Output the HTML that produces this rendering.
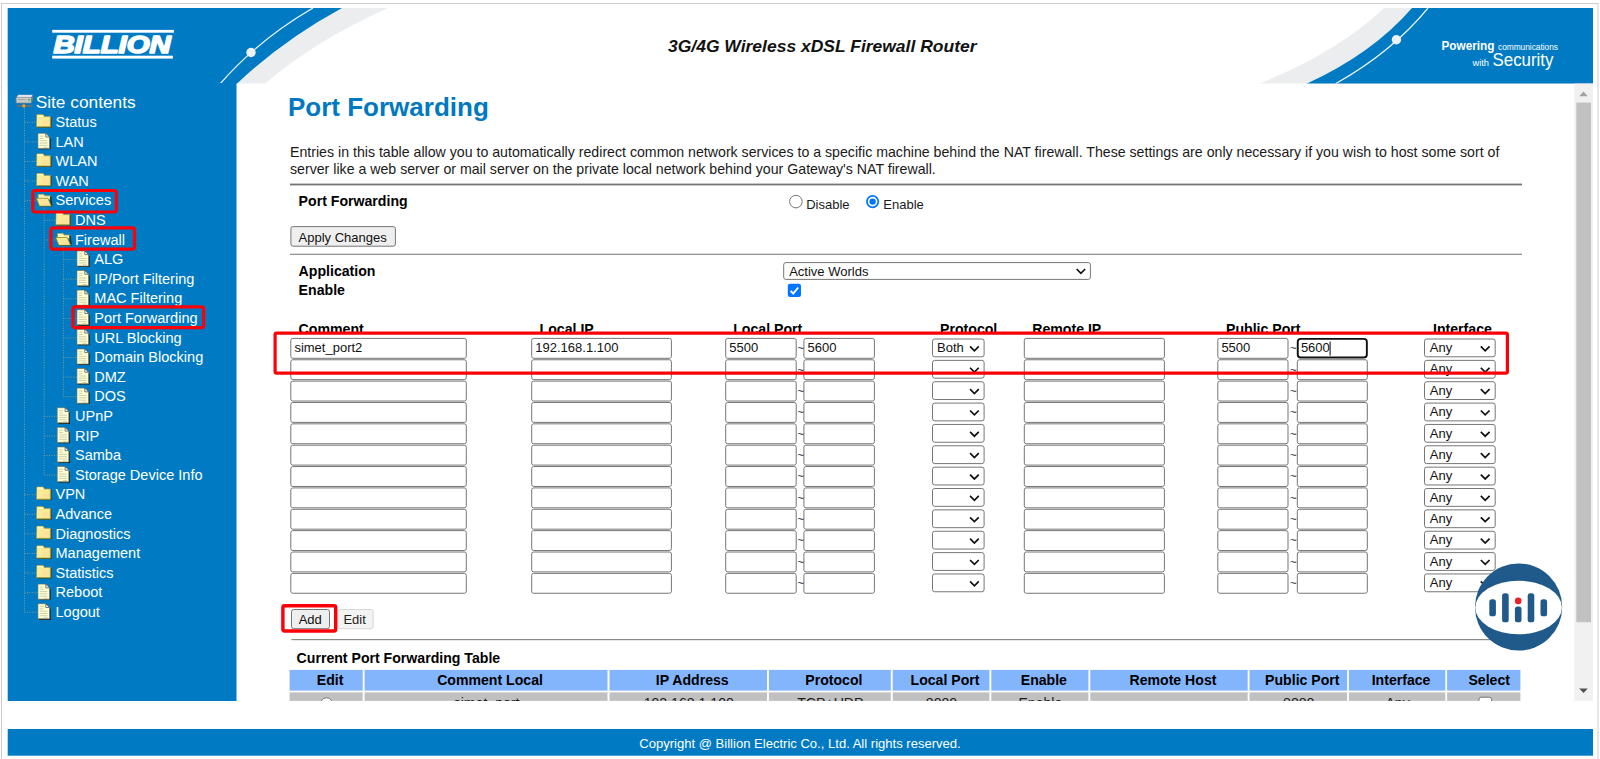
<!DOCTYPE html>
<html><head><meta charset="utf-8"><title>Port Forwarding</title>
<style>
html,body{margin:0;padding:0;}
body{width:1600px;height:759px;overflow:hidden;background:#fff;position:relative;font-family:"Liberation Sans",Arial,sans-serif;color:#000;}
.abs{position:absolute;}
svg{position:absolute;left:0;top:0;overflow:visible;}
.t{position:absolute;white-space:nowrap;line-height:1;}
.nav{position:absolute;white-space:nowrap;color:#fff;font-size:14.4px;line-height:1;}
.th{position:absolute;top:670px;height:20.4px;box-sizing:border-box;padding-left:8px;font-weight:bold;font-size:14.1px;line-height:20.2px;text-align:center;white-space:nowrap;}
.td{position:absolute;top:692.4px;height:8.6px;box-sizing:border-box;padding-left:1px;font-size:14.1px;line-height:23.4px;text-align:center;white-space:nowrap;overflow:hidden;color:#1a1a1a;}
</style></head><body>

<svg width="1600" height="759" viewBox="0 0 1600 759">
<rect x="1.5" y="3.5" width="1596.5" height="800" fill="none" stroke="#cdcdcd" stroke-width="1"/>
<defs><clipPath id="hc"><rect x="7.7" y="8.1" width="1585.3" height="75.5"/></clipPath></defs>
<g clip-path="url(#hc)">
<path d="M7,8 L388,8 Q316,40 264.5,84 L7,84 Z" fill="#ecedee"/>
<path d="M7,8 L342,8 Q283,40 236.6,84 L7,84 Z" fill="#007bc3"/>
<path d="M220,84 Q258,40 313,8" fill="none" stroke="#eef3f7" stroke-width="1.25"/>
<circle cx="251" cy="52.5" r="4.7" fill="#eef1f3"/>
<path d="M1594,8 L1384,8 Q1338,52 1258.5,84 L1594,84 Z" fill="#ecedee"/>
<path d="M1594,8 L1412,8 Q1372,54 1306,84 L1594,84 Z" fill="#007bc3"/>
<path d="M1335,84 Q1392,52 1428,8" fill="none" stroke="#eef3f7" stroke-width="1.25"/>
<circle cx="1396.4" cy="39.8" r="4.7" fill="#eef1f3"/>
</g>
<rect x="52.2" y="29.9" width="121.7" height="2.8" fill="#fff"/>
<rect x="52.2" y="55.7" width="120.7" height="2.9" fill="#fff"/>
<text x="53.4" y="52.9" font-family="Liberation Sans, Arial, sans-serif" font-weight="bold" font-style="italic" font-size="24" fill="#fff" stroke="#fff" stroke-width="1.6" stroke-linejoin="round" textLength="117.4" lengthAdjust="spacingAndGlyphs">BILLION</text>
<text x="668" y="51.5" font-family="Liberation Sans, Arial, sans-serif" font-weight="bold" font-style="italic" font-size="17.3" fill="#111" textLength="308.5" lengthAdjust="spacingAndGlyphs">3G/4G Wireless xDSL Firewall Router</text>
<text x="1441.5" y="49.5" font-family="Liberation Sans, Arial, sans-serif" font-weight="bold" font-size="12" fill="#fff" textLength="53" lengthAdjust="spacingAndGlyphs">Powering</text>
<text x="1498" y="49.5" font-family="Liberation Sans, Arial, sans-serif" font-size="8.6" fill="#fff" textLength="60" lengthAdjust="spacingAndGlyphs">communications</text>
<text x="1472.5" y="65.5" font-family="Liberation Sans, Arial, sans-serif" font-size="9.3" fill="#fff" textLength="16.5" lengthAdjust="spacingAndGlyphs">with</text>
<text x="1492.5" y="65.5" font-family="Liberation Sans, Arial, sans-serif" font-size="18" fill="#fff" textLength="61" lengthAdjust="spacingAndGlyphs">Security</text>
<rect x="7.7" y="83" width="228.8" height="618" fill="#007bc3"/>
<rect x="7.7" y="729" width="1585.3" height="26.7" fill="#007bc3"/>
<defs>
<symbol id="fc" viewBox="0 0 16 14"><path d="M1.4,3.2 h14.6 v10.8 h-14.6 z" fill="#4b4a16"/><path d="M0.4,0.9 Q0.4,0.3 1.2,0.3 h5.3 q0.6,0 0.9,0.6 l0.8,1.6 h6.2 v10.4 h-14.4 z" fill="#fbea97" stroke="#a39f45" stroke-width="0.8"/><path d="M1,1 h5.6 l0.9,1.7 h-6.5 z" fill="#fff8bd"/><path d="M8,6 l5,0 0,5.5 -7,0 z" fill="#fcd9a0" opacity="0.45"/></symbol>
<symbol id="fo" viewBox="0 0 17 13"><path d="M2.3,1.2 Q2.3,0.4 3.2,0.4 h4.2 q0.7,0 1,0.7 l0.5,1 h5.6 v3.6 h-12.2 z" fill="#fff4ae" stroke="#a39f45" stroke-width="0.8"/><path d="M14.2,2.6 l1.3,0.5 1.2,9.6 -1.8,0 z" fill="#2e2d10"/><path d="M0.5,4.6 h11.6 l3.4,7.9 h-11.8 z" fill="#fbe892" stroke="#8b8837" stroke-width="0.8"/><path d="M3.9,12.6 h11.9 v0.6 h-11.3 z" fill="#3d3c14"/><path d="M6,7 l5,0 2,4.5 -6,0 z" fill="#fcd9a0" opacity="0.45"/></symbol>
<symbol id="dc" viewBox="0 0 13 16"><path d="M1.6,1.8 h7.2 l3.9,3.6 v10.6 h-11.1 z" fill="#1c1c1c"/><path d="M0.4,0.4 h7.6 l3.6,3.6 v11 h-11.2 z" fill="#ffffd6" stroke="#77775c" stroke-width="0.7"/><path d="M8,0.4 v3.6 h3.6 z" fill="#fff" stroke="#444" stroke-width="0.7" stroke-linejoin="round"/><path d="M2.2,3.2 h3.6 M2.2,5.4 h3.6 M2.2,7.6 h7.4 M2.2,9.8 h7.4 M2.2,12 h7.4 M6,13.9 h3.6" stroke="#c4c4a6" stroke-width="0.8" fill="none"/></symbol>
<symbol id="rt" viewBox="0 0 18 13"><path d="M3.2,0.6 h13.6 l-1.6,2.6 h-13.8 z" fill="#e6e6e6"/><path d="M1.2,3 h14.2 v5.2 h-14.2 z" fill="#c9c9c9" stroke="#8e8e8e" stroke-width="0.6"/><path d="M15.4,3 l1.6,-2.4 v4.8 l-1.6,2.8 z" fill="#777"/><rect x="12.2" y="4.4" width="2" height="1.6" fill="#3ec44a"/><path d="M3,5 h7" stroke="#999" stroke-width="0.7"/><rect x="7.9" y="8.2" width="1" height="2.4" fill="#777"/><rect x="1.6" y="10.2" width="14.6" height="1.6" fill="#6f6f6f"/><circle cx="8.4" cy="11" r="1.5" fill="#f5a31a"/></symbol>
<symbol id="cv" viewBox="0 0 10 7"><path d="M0.8,1.2 L5,5.4 L9.2,1.2" fill="none" stroke="#111" stroke-width="1.65"/></symbol>
</defs>
<path d="M24.5,108.0 V612.3" stroke="#a39f84" stroke-width="1" stroke-dasharray="1 1.45" fill="none" opacity="0.8"/>
<path d="M44.2,207.7 V475.1" stroke="#a39f84" stroke-width="1" stroke-dasharray="1 1.45" fill="none" opacity="0.8"/>
<path d="M63.4,246.9 V396.7" stroke="#a39f84" stroke-width="1" stroke-dasharray="1 1.45" fill="none" opacity="0.8"/>
<use href="#rt" x="14.9" y="94.2" width="19.2" height="13.9"/>
<path d="M24.5,122.3 H36.3" stroke="#a39f84" stroke-width="1" stroke-dasharray="1 1.45" fill="none" opacity="0.8"/>
<use href="#fc" x="36.3" y="114.1" width="15.6" height="13.8"/>
<path d="M24.5,141.9 H37.8" stroke="#a39f84" stroke-width="1" stroke-dasharray="1 1.45" fill="none" opacity="0.8"/>
<use href="#dc" x="37.5" y="132.9" width="13.5" height="16.6"/>
<path d="M24.5,161.5 H36.3" stroke="#a39f84" stroke-width="1" stroke-dasharray="1 1.45" fill="none" opacity="0.8"/>
<use href="#fc" x="36.3" y="153.3" width="15.6" height="13.8"/>
<path d="M24.5,181.1 H36.3" stroke="#a39f84" stroke-width="1" stroke-dasharray="1 1.45" fill="none" opacity="0.8"/>
<use href="#fc" x="36.3" y="172.9" width="15.6" height="13.8"/>
<path d="M24.5,200.7 H36.3" stroke="#a39f84" stroke-width="1" stroke-dasharray="1 1.45" fill="none" opacity="0.8"/>
<use href="#fo" x="35.9" y="193.7" width="16.9" height="13"/>
<path d="M44.2,220.3 H55.6" stroke="#a39f84" stroke-width="1" stroke-dasharray="1 1.45" fill="none" opacity="0.8"/>
<use href="#fc" x="55.6" y="212.1" width="15.6" height="13.8"/>
<path d="M44.2,239.9 H55.6" stroke="#a39f84" stroke-width="1" stroke-dasharray="1 1.45" fill="none" opacity="0.8"/>
<use href="#fo" x="55.2" y="232.9" width="16.9" height="13"/>
<path d="M63.4,259.5 H76.8" stroke="#a39f84" stroke-width="1" stroke-dasharray="1 1.45" fill="none" opacity="0.8"/>
<use href="#dc" x="76.5" y="250.5" width="13.5" height="16.6"/>
<path d="M63.4,279.1 H76.8" stroke="#a39f84" stroke-width="1" stroke-dasharray="1 1.45" fill="none" opacity="0.8"/>
<use href="#dc" x="76.5" y="270.1" width="13.5" height="16.6"/>
<path d="M63.4,298.7 H76.8" stroke="#a39f84" stroke-width="1" stroke-dasharray="1 1.45" fill="none" opacity="0.8"/>
<use href="#dc" x="76.5" y="289.7" width="13.5" height="16.6"/>
<path d="M63.4,318.3 H76.8" stroke="#a39f84" stroke-width="1" stroke-dasharray="1 1.45" fill="none" opacity="0.8"/>
<use href="#dc" x="76.5" y="309.3" width="13.5" height="16.6"/>
<path d="M63.4,337.9 H76.8" stroke="#a39f84" stroke-width="1" stroke-dasharray="1 1.45" fill="none" opacity="0.8"/>
<use href="#dc" x="76.5" y="328.9" width="13.5" height="16.6"/>
<path d="M63.4,357.5 H76.8" stroke="#a39f84" stroke-width="1" stroke-dasharray="1 1.45" fill="none" opacity="0.8"/>
<use href="#dc" x="76.5" y="348.5" width="13.5" height="16.6"/>
<path d="M63.4,377.1 H76.8" stroke="#a39f84" stroke-width="1" stroke-dasharray="1 1.45" fill="none" opacity="0.8"/>
<use href="#dc" x="76.5" y="368.1" width="13.5" height="16.6"/>
<path d="M63.4,396.7 H76.8" stroke="#a39f84" stroke-width="1" stroke-dasharray="1 1.45" fill="none" opacity="0.8"/>
<use href="#dc" x="76.5" y="387.7" width="13.5" height="16.6"/>
<path d="M44.2,416.3 H57.1" stroke="#a39f84" stroke-width="1" stroke-dasharray="1 1.45" fill="none" opacity="0.8"/>
<use href="#dc" x="56.8" y="407.3" width="13.5" height="16.6"/>
<path d="M44.2,435.9 H57.1" stroke="#a39f84" stroke-width="1" stroke-dasharray="1 1.45" fill="none" opacity="0.8"/>
<use href="#dc" x="56.8" y="426.9" width="13.5" height="16.6"/>
<path d="M44.2,455.5 H57.1" stroke="#a39f84" stroke-width="1" stroke-dasharray="1 1.45" fill="none" opacity="0.8"/>
<use href="#dc" x="56.8" y="446.5" width="13.5" height="16.6"/>
<path d="M44.2,475.1 H57.1" stroke="#a39f84" stroke-width="1" stroke-dasharray="1 1.45" fill="none" opacity="0.8"/>
<use href="#dc" x="56.8" y="466.1" width="13.5" height="16.6"/>
<path d="M24.5,494.7 H36.3" stroke="#a39f84" stroke-width="1" stroke-dasharray="1 1.45" fill="none" opacity="0.8"/>
<use href="#fc" x="36.3" y="486.5" width="15.6" height="13.8"/>
<path d="M24.5,514.3 H36.3" stroke="#a39f84" stroke-width="1" stroke-dasharray="1 1.45" fill="none" opacity="0.8"/>
<use href="#fc" x="36.3" y="506.1" width="15.6" height="13.8"/>
<path d="M24.5,533.9 H36.3" stroke="#a39f84" stroke-width="1" stroke-dasharray="1 1.45" fill="none" opacity="0.8"/>
<use href="#fc" x="36.3" y="525.7" width="15.6" height="13.8"/>
<path d="M24.5,553.5 H36.3" stroke="#a39f84" stroke-width="1" stroke-dasharray="1 1.45" fill="none" opacity="0.8"/>
<use href="#fc" x="36.3" y="545.3" width="15.6" height="13.8"/>
<path d="M24.5,573.1 H36.3" stroke="#a39f84" stroke-width="1" stroke-dasharray="1 1.45" fill="none" opacity="0.8"/>
<use href="#fc" x="36.3" y="564.9" width="15.6" height="13.8"/>
<path d="M24.5,592.7 H37.8" stroke="#a39f84" stroke-width="1" stroke-dasharray="1 1.45" fill="none" opacity="0.8"/>
<use href="#dc" x="37.5" y="583.7" width="13.5" height="16.6"/>
<path d="M24.5,612.3 H37.8" stroke="#a39f84" stroke-width="1" stroke-dasharray="1 1.45" fill="none" opacity="0.8"/>
<use href="#dc" x="37.5" y="603.3" width="13.5" height="16.6"/>
<rect x="290" y="183.6" width="1232" height="1.8" fill="#757575"/>
<rect x="290" y="253.7" width="1232" height="1.2" fill="#8a8a8a"/>
<rect x="291.5" y="639" width="1230.5" height="1.2" fill="#8a8a8a"/>
<circle cx="795.9" cy="201.6" r="6.3" fill="#fff" stroke="#767676" stroke-width="1"/><circle cx="872.6" cy="201.6" r="5.7" fill="#fff" stroke="#0075ff" stroke-width="1.7"/><circle cx="872.6" cy="201.6" r="3.2" fill="#0075ff"/>
<rect x="290.90" y="226.60" width="104.50" height="19.60" rx="2.2" fill="#efefef" stroke="#767676" stroke-width="1"/>
<rect x="783.70" y="262.60" width="306.70" height="16.80" rx="2.2" fill="#fff" stroke="#767676" stroke-width="1"/>
<use href="#cv" x="1075.80" y="267.75" width="10.20" height="7.10"/>
<rect x="787.8" y="283.8" width="13.2" height="13.2" rx="2.2" fill="#0075ff"/><path d="M790.6,290.9 L793.2,293.5 L798.2,287.5" fill="none" stroke="#fff" stroke-width="1.9"/>
<rect x="290.80" y="338.40" width="175.50" height="19.90" rx="2" fill="#fff" stroke="#767676" stroke-width="1"/>
<rect x="531.70" y="338.40" width="139.70" height="19.90" rx="2" fill="#fff" stroke="#767676" stroke-width="1"/>
<rect x="725.70" y="338.40" width="70.50" height="19.90" rx="2" fill="#fff" stroke="#767676" stroke-width="1"/>
<rect x="803.90" y="338.40" width="70.50" height="19.90" rx="2" fill="#fff" stroke="#767676" stroke-width="1"/>
<rect x="1024.30" y="338.40" width="140.10" height="19.90" rx="2" fill="#fff" stroke="#767676" stroke-width="1"/>
<rect x="1217.80" y="338.40" width="70.20" height="19.90" rx="2" fill="#fff" stroke="#767676" stroke-width="1"/>
<rect x="1297.75" y="338.85" width="69.10" height="18.70" rx="3" fill="#fff" stroke="#101010" stroke-width="1.9"/>
<rect x="932.50" y="339.00" width="51.60" height="17.80" rx="2.2" fill="#fff" stroke="#767676" stroke-width="1"/>
<use href="#cv" x="969.20" y="345.15" width="10.40" height="7.30"/>
<rect x="1424.50" y="339.00" width="70.70" height="17.80" rx="2.2" fill="#fff" stroke="#767676" stroke-width="1"/>
<use href="#cv" x="1480.00" y="345.15" width="10.40" height="7.30"/>
<rect x="290.80" y="359.76" width="175.50" height="19.90" rx="2" fill="#fff" stroke="#767676" stroke-width="1"/>
<rect x="531.70" y="359.76" width="139.70" height="19.90" rx="2" fill="#fff" stroke="#767676" stroke-width="1"/>
<rect x="725.70" y="359.76" width="70.50" height="19.90" rx="2" fill="#fff" stroke="#767676" stroke-width="1"/>
<rect x="803.90" y="359.76" width="70.50" height="19.90" rx="2" fill="#fff" stroke="#767676" stroke-width="1"/>
<rect x="1024.30" y="359.76" width="140.10" height="19.90" rx="2" fill="#fff" stroke="#767676" stroke-width="1"/>
<rect x="1217.80" y="359.76" width="70.20" height="19.90" rx="2" fill="#fff" stroke="#767676" stroke-width="1"/>
<rect x="1297.30" y="359.76" width="70.00" height="19.90" rx="2" fill="#fff" stroke="#767676" stroke-width="1"/>
<rect x="932.50" y="360.36" width="51.60" height="17.80" rx="2.2" fill="#fff" stroke="#767676" stroke-width="1"/>
<use href="#cv" x="969.20" y="366.51" width="10.40" height="7.30"/>
<rect x="1424.50" y="360.36" width="70.70" height="17.80" rx="2.2" fill="#fff" stroke="#767676" stroke-width="1"/>
<use href="#cv" x="1480.00" y="366.51" width="10.40" height="7.30"/>
<rect x="290.80" y="381.12" width="175.50" height="19.90" rx="2" fill="#fff" stroke="#767676" stroke-width="1"/>
<rect x="531.70" y="381.12" width="139.70" height="19.90" rx="2" fill="#fff" stroke="#767676" stroke-width="1"/>
<rect x="725.70" y="381.12" width="70.50" height="19.90" rx="2" fill="#fff" stroke="#767676" stroke-width="1"/>
<rect x="803.90" y="381.12" width="70.50" height="19.90" rx="2" fill="#fff" stroke="#767676" stroke-width="1"/>
<rect x="1024.30" y="381.12" width="140.10" height="19.90" rx="2" fill="#fff" stroke="#767676" stroke-width="1"/>
<rect x="1217.80" y="381.12" width="70.20" height="19.90" rx="2" fill="#fff" stroke="#767676" stroke-width="1"/>
<rect x="1297.30" y="381.12" width="70.00" height="19.90" rx="2" fill="#fff" stroke="#767676" stroke-width="1"/>
<rect x="932.50" y="381.72" width="51.60" height="17.80" rx="2.2" fill="#fff" stroke="#767676" stroke-width="1"/>
<use href="#cv" x="969.20" y="387.87" width="10.40" height="7.30"/>
<rect x="1424.50" y="381.72" width="70.70" height="17.80" rx="2.2" fill="#fff" stroke="#767676" stroke-width="1"/>
<use href="#cv" x="1480.00" y="387.87" width="10.40" height="7.30"/>
<rect x="290.80" y="402.48" width="175.50" height="19.90" rx="2" fill="#fff" stroke="#767676" stroke-width="1"/>
<rect x="531.70" y="402.48" width="139.70" height="19.90" rx="2" fill="#fff" stroke="#767676" stroke-width="1"/>
<rect x="725.70" y="402.48" width="70.50" height="19.90" rx="2" fill="#fff" stroke="#767676" stroke-width="1"/>
<rect x="803.90" y="402.48" width="70.50" height="19.90" rx="2" fill="#fff" stroke="#767676" stroke-width="1"/>
<rect x="1024.30" y="402.48" width="140.10" height="19.90" rx="2" fill="#fff" stroke="#767676" stroke-width="1"/>
<rect x="1217.80" y="402.48" width="70.20" height="19.90" rx="2" fill="#fff" stroke="#767676" stroke-width="1"/>
<rect x="1297.30" y="402.48" width="70.00" height="19.90" rx="2" fill="#fff" stroke="#767676" stroke-width="1"/>
<rect x="932.50" y="403.08" width="51.60" height="17.80" rx="2.2" fill="#fff" stroke="#767676" stroke-width="1"/>
<use href="#cv" x="969.20" y="409.23" width="10.40" height="7.30"/>
<rect x="1424.50" y="403.08" width="70.70" height="17.80" rx="2.2" fill="#fff" stroke="#767676" stroke-width="1"/>
<use href="#cv" x="1480.00" y="409.23" width="10.40" height="7.30"/>
<rect x="290.80" y="423.84" width="175.50" height="19.90" rx="2" fill="#fff" stroke="#767676" stroke-width="1"/>
<rect x="531.70" y="423.84" width="139.70" height="19.90" rx="2" fill="#fff" stroke="#767676" stroke-width="1"/>
<rect x="725.70" y="423.84" width="70.50" height="19.90" rx="2" fill="#fff" stroke="#767676" stroke-width="1"/>
<rect x="803.90" y="423.84" width="70.50" height="19.90" rx="2" fill="#fff" stroke="#767676" stroke-width="1"/>
<rect x="1024.30" y="423.84" width="140.10" height="19.90" rx="2" fill="#fff" stroke="#767676" stroke-width="1"/>
<rect x="1217.80" y="423.84" width="70.20" height="19.90" rx="2" fill="#fff" stroke="#767676" stroke-width="1"/>
<rect x="1297.30" y="423.84" width="70.00" height="19.90" rx="2" fill="#fff" stroke="#767676" stroke-width="1"/>
<rect x="932.50" y="424.44" width="51.60" height="17.80" rx="2.2" fill="#fff" stroke="#767676" stroke-width="1"/>
<use href="#cv" x="969.20" y="430.59" width="10.40" height="7.30"/>
<rect x="1424.50" y="424.44" width="70.70" height="17.80" rx="2.2" fill="#fff" stroke="#767676" stroke-width="1"/>
<use href="#cv" x="1480.00" y="430.59" width="10.40" height="7.30"/>
<rect x="290.80" y="445.20" width="175.50" height="19.90" rx="2" fill="#fff" stroke="#767676" stroke-width="1"/>
<rect x="531.70" y="445.20" width="139.70" height="19.90" rx="2" fill="#fff" stroke="#767676" stroke-width="1"/>
<rect x="725.70" y="445.20" width="70.50" height="19.90" rx="2" fill="#fff" stroke="#767676" stroke-width="1"/>
<rect x="803.90" y="445.20" width="70.50" height="19.90" rx="2" fill="#fff" stroke="#767676" stroke-width="1"/>
<rect x="1024.30" y="445.20" width="140.10" height="19.90" rx="2" fill="#fff" stroke="#767676" stroke-width="1"/>
<rect x="1217.80" y="445.20" width="70.20" height="19.90" rx="2" fill="#fff" stroke="#767676" stroke-width="1"/>
<rect x="1297.30" y="445.20" width="70.00" height="19.90" rx="2" fill="#fff" stroke="#767676" stroke-width="1"/>
<rect x="932.50" y="445.80" width="51.60" height="17.80" rx="2.2" fill="#fff" stroke="#767676" stroke-width="1"/>
<use href="#cv" x="969.20" y="451.95" width="10.40" height="7.30"/>
<rect x="1424.50" y="445.80" width="70.70" height="17.80" rx="2.2" fill="#fff" stroke="#767676" stroke-width="1"/>
<use href="#cv" x="1480.00" y="451.95" width="10.40" height="7.30"/>
<rect x="290.80" y="466.56" width="175.50" height="19.90" rx="2" fill="#fff" stroke="#767676" stroke-width="1"/>
<rect x="531.70" y="466.56" width="139.70" height="19.90" rx="2" fill="#fff" stroke="#767676" stroke-width="1"/>
<rect x="725.70" y="466.56" width="70.50" height="19.90" rx="2" fill="#fff" stroke="#767676" stroke-width="1"/>
<rect x="803.90" y="466.56" width="70.50" height="19.90" rx="2" fill="#fff" stroke="#767676" stroke-width="1"/>
<rect x="1024.30" y="466.56" width="140.10" height="19.90" rx="2" fill="#fff" stroke="#767676" stroke-width="1"/>
<rect x="1217.80" y="466.56" width="70.20" height="19.90" rx="2" fill="#fff" stroke="#767676" stroke-width="1"/>
<rect x="1297.30" y="466.56" width="70.00" height="19.90" rx="2" fill="#fff" stroke="#767676" stroke-width="1"/>
<rect x="932.50" y="467.16" width="51.60" height="17.80" rx="2.2" fill="#fff" stroke="#767676" stroke-width="1"/>
<use href="#cv" x="969.20" y="473.31" width="10.40" height="7.30"/>
<rect x="1424.50" y="467.16" width="70.70" height="17.80" rx="2.2" fill="#fff" stroke="#767676" stroke-width="1"/>
<use href="#cv" x="1480.00" y="473.31" width="10.40" height="7.30"/>
<rect x="290.80" y="487.92" width="175.50" height="19.90" rx="2" fill="#fff" stroke="#767676" stroke-width="1"/>
<rect x="531.70" y="487.92" width="139.70" height="19.90" rx="2" fill="#fff" stroke="#767676" stroke-width="1"/>
<rect x="725.70" y="487.92" width="70.50" height="19.90" rx="2" fill="#fff" stroke="#767676" stroke-width="1"/>
<rect x="803.90" y="487.92" width="70.50" height="19.90" rx="2" fill="#fff" stroke="#767676" stroke-width="1"/>
<rect x="1024.30" y="487.92" width="140.10" height="19.90" rx="2" fill="#fff" stroke="#767676" stroke-width="1"/>
<rect x="1217.80" y="487.92" width="70.20" height="19.90" rx="2" fill="#fff" stroke="#767676" stroke-width="1"/>
<rect x="1297.30" y="487.92" width="70.00" height="19.90" rx="2" fill="#fff" stroke="#767676" stroke-width="1"/>
<rect x="932.50" y="488.52" width="51.60" height="17.80" rx="2.2" fill="#fff" stroke="#767676" stroke-width="1"/>
<use href="#cv" x="969.20" y="494.67" width="10.40" height="7.30"/>
<rect x="1424.50" y="488.52" width="70.70" height="17.80" rx="2.2" fill="#fff" stroke="#767676" stroke-width="1"/>
<use href="#cv" x="1480.00" y="494.67" width="10.40" height="7.30"/>
<rect x="290.80" y="509.28" width="175.50" height="19.90" rx="2" fill="#fff" stroke="#767676" stroke-width="1"/>
<rect x="531.70" y="509.28" width="139.70" height="19.90" rx="2" fill="#fff" stroke="#767676" stroke-width="1"/>
<rect x="725.70" y="509.28" width="70.50" height="19.90" rx="2" fill="#fff" stroke="#767676" stroke-width="1"/>
<rect x="803.90" y="509.28" width="70.50" height="19.90" rx="2" fill="#fff" stroke="#767676" stroke-width="1"/>
<rect x="1024.30" y="509.28" width="140.10" height="19.90" rx="2" fill="#fff" stroke="#767676" stroke-width="1"/>
<rect x="1217.80" y="509.28" width="70.20" height="19.90" rx="2" fill="#fff" stroke="#767676" stroke-width="1"/>
<rect x="1297.30" y="509.28" width="70.00" height="19.90" rx="2" fill="#fff" stroke="#767676" stroke-width="1"/>
<rect x="932.50" y="509.88" width="51.60" height="17.80" rx="2.2" fill="#fff" stroke="#767676" stroke-width="1"/>
<use href="#cv" x="969.20" y="516.03" width="10.40" height="7.30"/>
<rect x="1424.50" y="509.88" width="70.70" height="17.80" rx="2.2" fill="#fff" stroke="#767676" stroke-width="1"/>
<use href="#cv" x="1480.00" y="516.03" width="10.40" height="7.30"/>
<rect x="290.80" y="530.64" width="175.50" height="19.90" rx="2" fill="#fff" stroke="#767676" stroke-width="1"/>
<rect x="531.70" y="530.64" width="139.70" height="19.90" rx="2" fill="#fff" stroke="#767676" stroke-width="1"/>
<rect x="725.70" y="530.64" width="70.50" height="19.90" rx="2" fill="#fff" stroke="#767676" stroke-width="1"/>
<rect x="803.90" y="530.64" width="70.50" height="19.90" rx="2" fill="#fff" stroke="#767676" stroke-width="1"/>
<rect x="1024.30" y="530.64" width="140.10" height="19.90" rx="2" fill="#fff" stroke="#767676" stroke-width="1"/>
<rect x="1217.80" y="530.64" width="70.20" height="19.90" rx="2" fill="#fff" stroke="#767676" stroke-width="1"/>
<rect x="1297.30" y="530.64" width="70.00" height="19.90" rx="2" fill="#fff" stroke="#767676" stroke-width="1"/>
<rect x="932.50" y="531.24" width="51.60" height="17.80" rx="2.2" fill="#fff" stroke="#767676" stroke-width="1"/>
<use href="#cv" x="969.20" y="537.39" width="10.40" height="7.30"/>
<rect x="1424.50" y="531.24" width="70.70" height="17.80" rx="2.2" fill="#fff" stroke="#767676" stroke-width="1"/>
<use href="#cv" x="1480.00" y="537.39" width="10.40" height="7.30"/>
<rect x="290.80" y="552.00" width="175.50" height="19.90" rx="2" fill="#fff" stroke="#767676" stroke-width="1"/>
<rect x="531.70" y="552.00" width="139.70" height="19.90" rx="2" fill="#fff" stroke="#767676" stroke-width="1"/>
<rect x="725.70" y="552.00" width="70.50" height="19.90" rx="2" fill="#fff" stroke="#767676" stroke-width="1"/>
<rect x="803.90" y="552.00" width="70.50" height="19.90" rx="2" fill="#fff" stroke="#767676" stroke-width="1"/>
<rect x="1024.30" y="552.00" width="140.10" height="19.90" rx="2" fill="#fff" stroke="#767676" stroke-width="1"/>
<rect x="1217.80" y="552.00" width="70.20" height="19.90" rx="2" fill="#fff" stroke="#767676" stroke-width="1"/>
<rect x="1297.30" y="552.00" width="70.00" height="19.90" rx="2" fill="#fff" stroke="#767676" stroke-width="1"/>
<rect x="932.50" y="552.60" width="51.60" height="17.80" rx="2.2" fill="#fff" stroke="#767676" stroke-width="1"/>
<use href="#cv" x="969.20" y="558.75" width="10.40" height="7.30"/>
<rect x="1424.50" y="552.60" width="70.70" height="17.80" rx="2.2" fill="#fff" stroke="#767676" stroke-width="1"/>
<use href="#cv" x="1480.00" y="558.75" width="10.40" height="7.30"/>
<rect x="290.80" y="573.36" width="175.50" height="19.90" rx="2" fill="#fff" stroke="#767676" stroke-width="1"/>
<rect x="531.70" y="573.36" width="139.70" height="19.90" rx="2" fill="#fff" stroke="#767676" stroke-width="1"/>
<rect x="725.70" y="573.36" width="70.50" height="19.90" rx="2" fill="#fff" stroke="#767676" stroke-width="1"/>
<rect x="803.90" y="573.36" width="70.50" height="19.90" rx="2" fill="#fff" stroke="#767676" stroke-width="1"/>
<rect x="1024.30" y="573.36" width="140.10" height="19.90" rx="2" fill="#fff" stroke="#767676" stroke-width="1"/>
<rect x="1217.80" y="573.36" width="70.20" height="19.90" rx="2" fill="#fff" stroke="#767676" stroke-width="1"/>
<rect x="1297.30" y="573.36" width="70.00" height="19.90" rx="2" fill="#fff" stroke="#767676" stroke-width="1"/>
<rect x="932.50" y="573.96" width="51.60" height="17.80" rx="2.2" fill="#fff" stroke="#767676" stroke-width="1"/>
<use href="#cv" x="969.20" y="580.11" width="10.40" height="7.30"/>
<rect x="1424.50" y="573.96" width="70.70" height="17.80" rx="2.2" fill="#fff" stroke="#767676" stroke-width="1"/>
<use href="#cv" x="1480.00" y="580.11" width="10.40" height="7.30"/>
<rect x="1329.6" y="341.6" width="1" height="14" fill="#000"/>
<rect x="337.90" y="609.50" width="35.20" height="19.20" rx="2.2" fill="#f3f3f3" stroke="#d6d6d6" stroke-width="1"/>
<rect x="291.50" y="609.50" width="38.00" height="19.20" rx="2.2" fill="#efefef" stroke="#767676" stroke-width="1"/>
<defs><clipPath id="gr"><rect x="280" y="692.4" width="1250" height="8.5"/></clipPath></defs>
<rect x="289.6" y="669.9" width="73.1" height="20.7" fill="#83b5fc"/>
<rect x="289.6" y="692.4" width="73.1" height="8.5" fill="#c0c0c0"/>
<rect x="364.6" y="669.9" width="242.9" height="20.7" fill="#83b5fc"/>
<rect x="364.6" y="692.4" width="242.9" height="8.5" fill="#c0c0c0"/>
<rect x="609.5" y="669.9" width="157.5" height="20.7" fill="#83b5fc"/>
<rect x="609.5" y="692.4" width="157.5" height="8.5" fill="#c0c0c0"/>
<rect x="768.9" y="669.9" width="121.9" height="20.7" fill="#83b5fc"/>
<rect x="768.9" y="692.4" width="121.9" height="8.5" fill="#c0c0c0"/>
<rect x="892.7" y="669.9" width="96.7" height="20.7" fill="#83b5fc"/>
<rect x="892.7" y="692.4" width="96.7" height="8.5" fill="#c0c0c0"/>
<rect x="991.3" y="669.9" width="97.1" height="20.7" fill="#83b5fc"/>
<rect x="991.3" y="692.4" width="97.1" height="8.5" fill="#c0c0c0"/>
<rect x="1090.3" y="669.9" width="157.4" height="20.7" fill="#83b5fc"/>
<rect x="1090.3" y="692.4" width="157.4" height="8.5" fill="#c0c0c0"/>
<rect x="1249.5" y="669.9" width="97.6" height="20.7" fill="#83b5fc"/>
<rect x="1249.5" y="692.4" width="97.6" height="8.5" fill="#c0c0c0"/>
<rect x="1348.9" y="669.9" width="96.4" height="20.7" fill="#83b5fc"/>
<rect x="1348.9" y="692.4" width="96.4" height="8.5" fill="#c0c0c0"/>
<rect x="1447.1" y="669.9" width="73.3" height="20.7" fill="#83b5fc"/>
<rect x="1447.1" y="692.4" width="73.3" height="8.5" fill="#c0c0c0"/>
<g clip-path="url(#gr)"><circle cx="326.5" cy="703.8" r="6" fill="#fff" stroke="#767676"/><rect x="1479" y="697.2" width="12.6" height="12.6" rx="2.2" fill="#fff" stroke="#767676"/></g>
<rect x="1574.3" y="83.6" width="18.7" height="617.3" fill="#f1f1f1"/>
<rect x="1576.3" y="102.6" width="14.7" height="519.6" fill="#c1c1c1"/>
<path d="M1579.2,96.2 L1583.5,91.6 L1587.8,96.2 Z" fill="#a3a3a3"/><path d="M1579.2,688.4 L1583.5,693 L1587.8,688.4 Z" fill="#505050"/>
</svg>
<div class="t" style="left:35.70px;top:94.06px;font-size:17.3px;color:#fff;">Site contents</div>
<div class="t" style="left:55.50px;top:114.91px;font-size:14.52px;color:#fff;">Status</div>
<div class="t" style="left:55.50px;top:134.51px;font-size:14.52px;color:#fff;">LAN</div>
<div class="t" style="left:55.50px;top:154.11px;font-size:14.52px;color:#fff;">WLAN</div>
<div class="t" style="left:55.50px;top:173.71px;font-size:14.52px;color:#fff;">WAN</div>
<div class="t" style="left:55.50px;top:193.31px;font-size:14.52px;color:#fff;">Services</div>
<div class="t" style="left:75.00px;top:212.91px;font-size:14.52px;color:#fff;">DNS</div>
<div class="t" style="left:75.00px;top:232.51px;font-size:14.52px;color:#fff;">Firewall</div>
<div class="t" style="left:94.30px;top:252.11px;font-size:14.52px;color:#fff;">ALG</div>
<div class="t" style="left:94.30px;top:271.71px;font-size:14.52px;color:#fff;">IP/Port Filtering</div>
<div class="t" style="left:94.30px;top:291.31px;font-size:14.52px;color:#fff;">MAC Filtering</div>
<div class="t" style="left:94.30px;top:310.91px;font-size:14.52px;color:#fff;">Port Forwarding</div>
<div class="t" style="left:94.30px;top:330.51px;font-size:14.52px;color:#fff;">URL Blocking</div>
<div class="t" style="left:94.30px;top:350.11px;font-size:14.52px;color:#fff;">Domain Blocking</div>
<div class="t" style="left:94.30px;top:369.71px;font-size:14.52px;color:#fff;">DMZ</div>
<div class="t" style="left:94.30px;top:389.31px;font-size:14.52px;color:#fff;">DOS</div>
<div class="t" style="left:75.00px;top:408.91px;font-size:14.52px;color:#fff;">UPnP</div>
<div class="t" style="left:75.00px;top:428.51px;font-size:14.52px;color:#fff;">RIP</div>
<div class="t" style="left:75.00px;top:448.11px;font-size:14.52px;color:#fff;">Samba</div>
<div class="t" style="left:75.00px;top:467.71px;font-size:14.52px;color:#fff;">Storage Device Info</div>
<div class="t" style="left:55.50px;top:487.31px;font-size:14.52px;color:#fff;">VPN</div>
<div class="t" style="left:55.50px;top:506.91px;font-size:14.52px;color:#fff;">Advance</div>
<div class="t" style="left:55.50px;top:526.51px;font-size:14.52px;color:#fff;">Diagnostics</div>
<div class="t" style="left:55.50px;top:546.11px;font-size:14.52px;color:#fff;">Management</div>
<div class="t" style="left:55.50px;top:565.71px;font-size:14.52px;color:#fff;">Statistics</div>
<div class="t" style="left:55.50px;top:585.31px;font-size:14.52px;color:#fff;">Reboot</div>
<div class="t" style="left:55.50px;top:604.91px;font-size:14.52px;color:#fff;">Logout</div>
<div class="t" style="left:0;width:1600px;text-align:center;top:737.2px;font-size:13.06px;color:#fff;">Copyright @ Billion Electric Co., Ltd. All rights reserved.</div>
<div class="t" style="left:288.00px;top:94.39px;font-size:26px;font-weight:bold;color:#0079c1;">Port Forwarding</div>
<div class="abs" style="left:290px;top:144.4px;width:1232px;font-size:14.16px;line-height:16.3px;color:#1a1a1a;">Entries in this table allow you to automatically redirect common network services to a specific machine behind the NAT firewall. These settings are only necessary if you wish to host some sort of server like a web server or mail server on the private local network behind your Gateway's NAT firewall.</div>
<div class="t" style="left:298.60px;top:193.93px;font-size:14.14px;font-weight:bold;color:#000;">Port Forwarding</div>
<div class="t" style="left:806.20px;top:197.80px;font-size:13px;color:#1a1a1a;">Disable</div>
<div class="t" style="left:883.30px;top:197.80px;font-size:13px;color:#1a1a1a;">Enable</div>
<div class="t" style="left:298.60px;top:230.70px;font-size:13px;color:#111;">Apply Changes</div>
<div class="t" style="left:298.60px;top:263.93px;font-size:14.14px;font-weight:bold;color:#000;">Application</div>
<div class="t" style="left:298.60px;top:282.73px;font-size:14.14px;font-weight:bold;color:#000;">Enable</div>
<div class="t" style="left:789.20px;top:265.00px;font-size:13px;color:#111;">Active Worlds</div>
<div class="t" style="left:298.60px;top:322.23px;font-size:14.14px;font-weight:bold;color:#000;">Comment</div>
<div class="t" style="left:539.60px;top:322.23px;font-size:14.14px;font-weight:bold;color:#000;">Local IP</div>
<div class="t" style="left:733.20px;top:322.23px;font-size:14.14px;font-weight:bold;color:#000;">Local Port</div>
<div class="t" style="left:940.00px;top:322.23px;font-size:14.14px;font-weight:bold;color:#000;">Protocol</div>
<div class="t" style="left:1032.20px;top:322.23px;font-size:14.14px;font-weight:bold;color:#000;">Remote IP</div>
<div class="t" style="left:1226.00px;top:322.23px;font-size:14.14px;font-weight:bold;color:#000;">Public Port</div>
<div class="t" style="left:1433.00px;top:322.23px;font-size:14.14px;font-weight:bold;color:#000;">Interface</div>
<div class="t" style="left:294.40px;top:341.10px;font-size:13px;color:#111;">simet_port2</div>
<div class="t" style="left:535.30px;top:341.10px;font-size:13px;color:#111;">192.168.1.100</div>
<div class="t" style="left:729.30px;top:341.10px;font-size:13px;color:#111;">5500</div>
<div class="t" style="left:807.50px;top:341.10px;font-size:13px;color:#111;">5600</div>
<div class="t" style="left:1221.40px;top:341.10px;font-size:13px;color:#111;">5500</div>
<div class="t" style="left:1300.90px;top:341.10px;font-size:13px;color:#111;">5600</div>
<div class="t" style="left:937.00px;top:341.10px;font-size:13px;color:#111;">Both</div>
<div class="t" style="left:797.30px;top:343.17px;font-size:11.5px;color:#223;">~</div>
<div class="t" style="left:1289.90px;top:343.17px;font-size:11.5px;color:#223;">~</div>
<div class="t" style="left:1429.80px;top:341.10px;font-size:13px;color:#111;">Any</div>
<div class="t" style="left:797.30px;top:364.53px;font-size:11.5px;color:#223;">~</div>
<div class="t" style="left:1289.90px;top:364.53px;font-size:11.5px;color:#223;">~</div>
<div class="t" style="left:1429.80px;top:362.46px;font-size:13px;color:#111;">Any</div>
<div class="t" style="left:797.30px;top:385.89px;font-size:11.5px;color:#223;">~</div>
<div class="t" style="left:1289.90px;top:385.89px;font-size:11.5px;color:#223;">~</div>
<div class="t" style="left:1429.80px;top:383.82px;font-size:13px;color:#111;">Any</div>
<div class="t" style="left:797.30px;top:407.25px;font-size:11.5px;color:#223;">~</div>
<div class="t" style="left:1289.90px;top:407.25px;font-size:11.5px;color:#223;">~</div>
<div class="t" style="left:1429.80px;top:405.18px;font-size:13px;color:#111;">Any</div>
<div class="t" style="left:797.30px;top:428.61px;font-size:11.5px;color:#223;">~</div>
<div class="t" style="left:1289.90px;top:428.61px;font-size:11.5px;color:#223;">~</div>
<div class="t" style="left:1429.80px;top:426.54px;font-size:13px;color:#111;">Any</div>
<div class="t" style="left:797.30px;top:449.97px;font-size:11.5px;color:#223;">~</div>
<div class="t" style="left:1289.90px;top:449.97px;font-size:11.5px;color:#223;">~</div>
<div class="t" style="left:1429.80px;top:447.90px;font-size:13px;color:#111;">Any</div>
<div class="t" style="left:797.30px;top:471.33px;font-size:11.5px;color:#223;">~</div>
<div class="t" style="left:1289.90px;top:471.33px;font-size:11.5px;color:#223;">~</div>
<div class="t" style="left:1429.80px;top:469.26px;font-size:13px;color:#111;">Any</div>
<div class="t" style="left:797.30px;top:492.69px;font-size:11.5px;color:#223;">~</div>
<div class="t" style="left:1289.90px;top:492.69px;font-size:11.5px;color:#223;">~</div>
<div class="t" style="left:1429.80px;top:490.62px;font-size:13px;color:#111;">Any</div>
<div class="t" style="left:797.30px;top:514.05px;font-size:11.5px;color:#223;">~</div>
<div class="t" style="left:1289.90px;top:514.05px;font-size:11.5px;color:#223;">~</div>
<div class="t" style="left:1429.80px;top:511.98px;font-size:13px;color:#111;">Any</div>
<div class="t" style="left:797.30px;top:535.41px;font-size:11.5px;color:#223;">~</div>
<div class="t" style="left:1289.90px;top:535.41px;font-size:11.5px;color:#223;">~</div>
<div class="t" style="left:1429.80px;top:533.34px;font-size:13px;color:#111;">Any</div>
<div class="t" style="left:797.30px;top:556.77px;font-size:11.5px;color:#223;">~</div>
<div class="t" style="left:1289.90px;top:556.77px;font-size:11.5px;color:#223;">~</div>
<div class="t" style="left:1429.80px;top:554.70px;font-size:13px;color:#111;">Any</div>
<div class="t" style="left:797.30px;top:578.13px;font-size:11.5px;color:#223;">~</div>
<div class="t" style="left:1289.90px;top:578.13px;font-size:11.5px;color:#223;">~</div>
<div class="t" style="left:1429.80px;top:576.06px;font-size:13px;color:#111;">Any</div>
<div class="t" style="left:343.40px;top:612.60px;font-size:13px;color:#222;">Edit</div>
<div class="t" style="left:298.70px;top:612.60px;font-size:13px;color:#111;">Add</div>
<div class="t" style="left:296.60px;top:650.65px;font-size:14.12px;font-weight:bold;color:#000;">Current Port Forwarding Table</div>
<div class="th" style="left:289.6px;width:73.1px">Edit</div>
<div class="th" style="left:364.6px;width:242.9px">Comment Local</div>
<div class="td" style="left:364.6px;width:242.9px">simet_port</div>
<div class="th" style="left:609.5px;width:157.5px">IP Address</div>
<div class="td" style="left:609.5px;width:157.5px">192.168.1.100</div>
<div class="th" style="left:768.9px;width:121.9px">Protocol</div>
<div class="td" style="left:768.9px;width:121.9px">TCP+UDP</div>
<div class="th" style="left:892.7px;width:96.7px">Local Port</div>
<div class="td" style="left:892.7px;width:96.7px">8080</div>
<div class="th" style="left:991.3px;width:97.1px">Enable</div>
<div class="td" style="left:991.3px;width:97.1px">Enable</div>
<div class="th" style="left:1090.3px;width:157.4px">Remote Host</div>
<div class="th" style="left:1249.5px;width:97.6px">Public Port</div>
<div class="td" style="left:1249.5px;width:97.6px">8080</div>
<div class="th" style="left:1348.9px;width:96.4px">Interface</div>
<div class="td" style="left:1348.9px;width:96.4px">Any</div>
<div class="th" style="left:1447.1px;width:73.3px;padding-left:11px">Select</div>
<svg width="1600" height="759" viewBox="0 0 1600 759">
<rect x="32.90" y="190.50" width="83.40" height="21.50" rx="2.2" fill="none" stroke="#fb0007" stroke-width="3.2"/>
<rect x="50.90" y="227.90" width="83.60" height="21.30" rx="2.2" fill="none" stroke="#fb0007" stroke-width="3.2"/>
<rect x="73.00" y="306.80" width="130.60" height="20.90" rx="2.2" fill="none" stroke="#fb0007" stroke-width="3.2"/>
<rect x="275.10" y="333.20" width="1232.30" height="39.90" rx="1.6" fill="none" stroke="#fb0007" stroke-width="3.2"/>
<rect x="282.90" y="605.70" width="52.80" height="25.30" rx="1.6999999999999997" fill="none" stroke="#fb0007" stroke-width="3.4"/>
<circle cx="1518.6" cy="607" r="43.6" fill="#1f5a8b"/>
<ellipse cx="1518.6" cy="607.5" rx="43.3" ry="26.8" fill="#fff"/>
<g fill="#1f5a8b"><rect x="1489.3" y="599.3" width="6.6" height="17" rx="2.6"/><rect x="1502.1" y="593.3" width="6.6" height="29" rx="2.6"/><rect x="1514.9" y="606.4" width="6.6" height="15.9" rx="2.6"/><rect x="1527.7" y="593.3" width="6.6" height="29" rx="2.6"/><rect x="1540.5" y="599.3" width="6.6" height="17" rx="2.6"/></g>
<circle cx="1518.2" cy="600.9" r="3.3" fill="#e9222a"/>
</svg>
</body></html>
